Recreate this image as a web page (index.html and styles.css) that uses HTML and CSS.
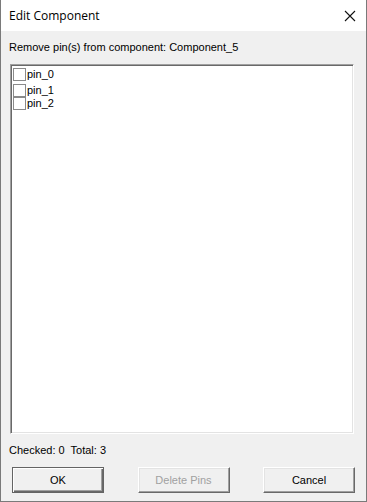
FILE: index.html
```html
<!DOCTYPE html>
<html lang="en">
<head>
    <meta charset="UTF-8">
    <title>Edit Component</title>
    <link rel="stylesheet" href="styles.css">
</head>
<body>
    <div class="dialog">
        <div class="title-bar">
            <span class="title">Edit Component</span>
            <svg class="close-icon" width="12" height="12" viewBox="0 0 12 12">
                <path d="M1 1 L11 11 M11 1 L1 11" stroke="#111" stroke-width="1.1" fill="none"/>
            </svg>
        </div>

        <div class="dialog-body">
            <div class="prompt">Remove pin(s) from component: Component_5</div>

            <div class="pin-list">
                <label class="pin-item first"><span class="check-box"></span>pin_0</label>
                <label class="pin-item"><span class="check-box"></span>pin_1</label>
                <label class="pin-item"><span class="check-box"></span>pin_2</label>
            </div>

            <div class="status">Checked: 0&nbsp; Total: 3</div>

            <div class="button-row">
                <button class="btn btn-default">OK</button>
                <button class="btn" disabled>Delete Pins</button>
                <button class="btn">Cancel</button>
            </div>
        </div>
    </div>
</body>
</html>
```

FILE: styles.css
```css
body {
    margin: 0;
    padding: 0;
    background: #f0f0f0;
    font-family: "Liberation Sans", Arial, sans-serif;
    font-size: 11px;
    color: #000;
}

.dialog {
    width: 365px;
    height: 501px;
    border: 1px solid #7a7a7a;
    border-top: none;
    background: #f0f0f0;
    display: flex;
    flex-direction: column;
}

.title-bar {
    height: 31px;
    background: #fff;
    display: flex;
    align-items: center;
    justify-content: space-between;
    padding: 0 10px 0 8px;
}

.title {
    font-family: "Open Sans", "Noto Sans", sans-serif;
    font-size: 12px;
    color: #000;
}

.close-icon {
    margin-top: 1px;
}

.dialog-body {
    flex: 1;
    padding: 10px 10px 0 8px;
    display: flex;
    flex-direction: column;
}

.prompt {
    height: 13px;
    line-height: 13px;
}

.pin-list {
    margin-top: 10px;
    margin-left: 1px;
    height: 362px;
    background: #fff;
    border-top: 1px solid #a0a0a0;
    border-left: 1px solid #a0a0a0;
    border-right: 1px solid #fff;
    border-bottom: 1px solid #fff;
    box-shadow: inset 1px 1px 0 #696969, inset -1px -1px 0 #e3e3e3;
    padding: 3px 2px;
    margin-right: 2px;
}

.pin-item {
    display: flex;
    align-items: center;
    height: 13px;
    line-height: 13px;
    color: #000;
}

.pin-item.first {
    margin-bottom: 3px;
}

.check-box {
    width: 11px;
    height: 11px;
    border: 1px solid #8a8a8a;
    background: #fff;
    margin-right: 1px;
}

.status {
    margin-top: 10px;
    height: 13px;
    line-height: 13px;
}

.button-row {
    margin-top: 10px;
    display: flex;
    justify-content: space-between;
    padding: 0 1px 0 3px;
}

.btn {
    width: 92px;
    height: 26px;
    font-family: "Liberation Sans", Arial, sans-serif;
    font-size: 11px;
    color: #000;
    background: #f0f0f0;
    border-top: 1px solid #fff;
    border-left: 1px solid #fff;
    border-right: 1px solid #696969;
    border-bottom: 1px solid #696969;
    box-shadow: inset -1px -1px 0 #a0a0a0, inset 1px 1px 0 #e3e3e3;
    padding: 0;
}

.btn:disabled {
    color: #a0a0a0;
}

.btn-default {
    border: 1px solid #646464;
    box-shadow: inset 1px 1px 0 #fff, inset -1px -1px 0 #696969, inset -2px -2px 0 #a0a0a0;
}
```
